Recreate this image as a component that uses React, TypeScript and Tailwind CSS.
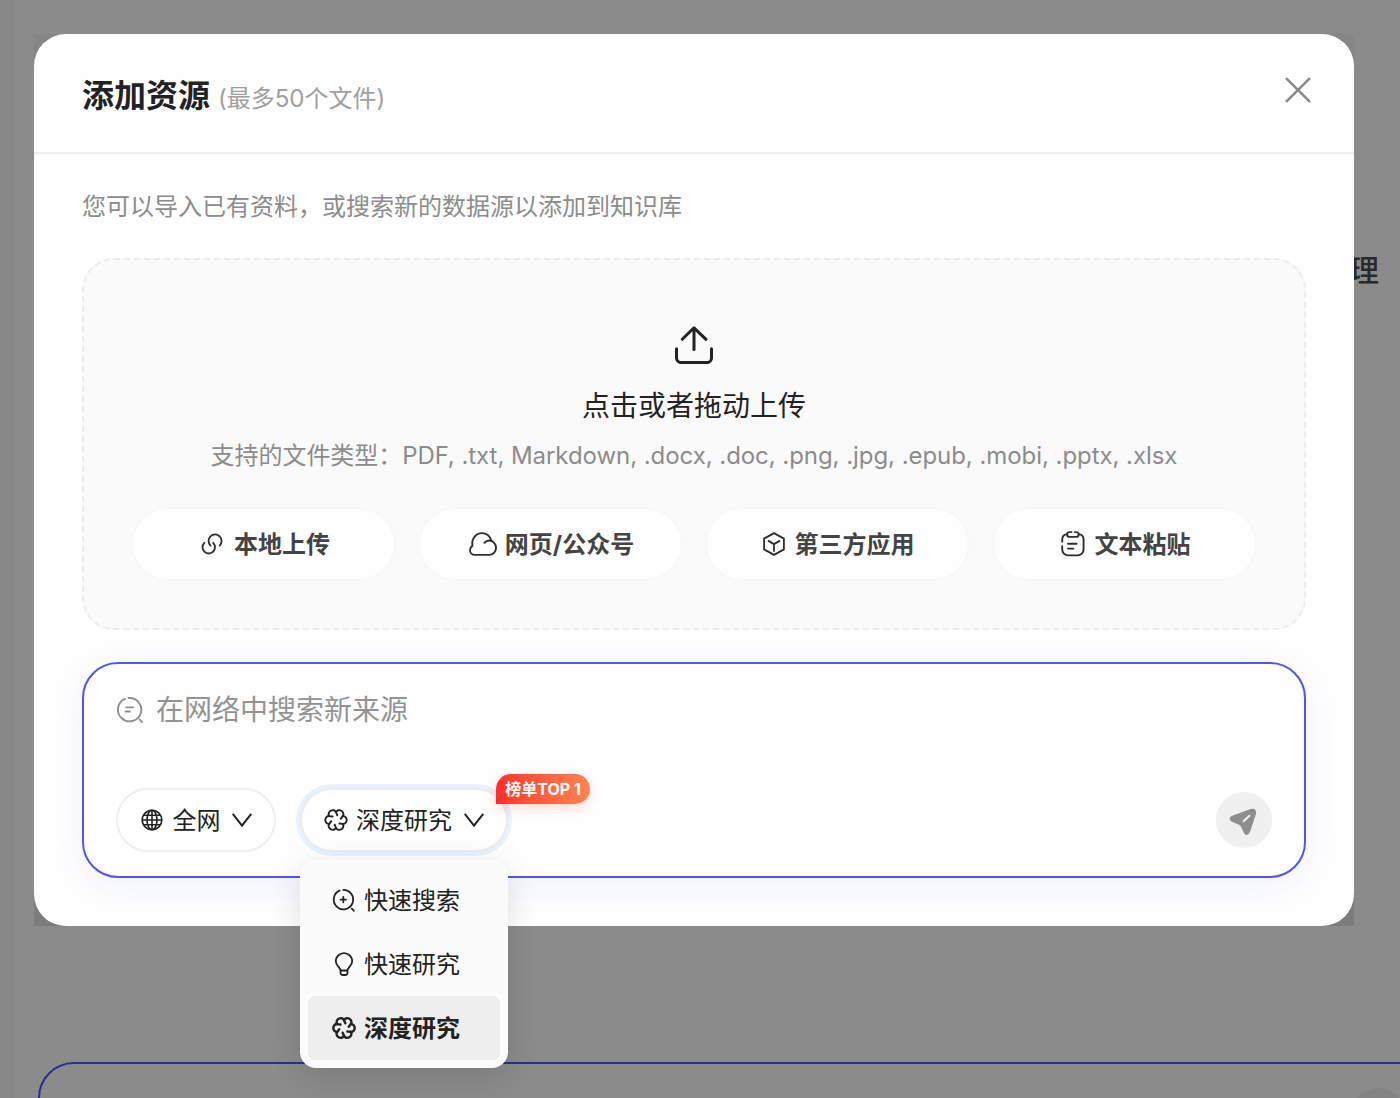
import React, { useState } from 'react';

const LOBES = [0, 60, 120, 180, 240, 300];

function UploadIcon() {
  return (
    <svg width="38" height="38" viewBox="0 0 38 38" fill="none" stroke="#222" strokeWidth="3" strokeLinecap="round" strokeLinejoin="round">
      <path d="M7.3 13.3 19 1.8l12 11.5M19 2v21.5" />
      <path d="M1.5 22.8v9.2a4.6 4.6 0 0 0 4.6 4.6h25.8a4.6 4.6 0 0 0 4.6-4.6v-9.2" />
    </svg>
  );
}

function LinkIcon() {
  return (
    <svg width="26" height="26" viewBox="0 0 24 24" fill="none" stroke="#2e2e2e" strokeWidth="1.7" strokeLinecap="round">
      <path d="M13.06 10.94c2.25 2.25 2.25 5.89 0 8.13s-5.89 2.25-8.13 0-2.25-5.89 0-8.13" />
      <path d="M10.59 13.41c-2.34-2.34-2.34-6.14 0-8.49s6.14-2.34 8.49 0 2.34 6.14 0 8.49" />
    </svg>
  );
}

function CloudIcon() {
  return (
    <svg width="28" height="24" viewBox="0 0 28 24" fill="none" stroke="#2e2e2e" strokeWidth="1.9" strokeLinecap="round" strokeLinejoin="round">
      <path d="M15.4 10.8C16.6 9.3 18.3 8.5 20.1 8.500c3.900 0 6.900 3.200 6.900 7.200s-3 7.200-6.900 7.200H5.800C3.100 22.900 1 20.900 1 18.200c0-2 .9-3.400 2.400-4.300C2.200 7 7 1.100 12.900 1.100c4.400 0 8 2.900 9.400 7.500" />
    </svg>
  );
}

function CubeIcon() {
  return (
    <svg width="22" height="24" viewBox="0 0 22 24" fill="none" stroke="#2e2e2e" strokeWidth="1.8" strokeLinejoin="round">
      <path d="m11 1.1 9.900 5.500v10.800L11 22.900l-9.900-5.500V6.600z" />
      <path d="m5 8.600 6 3.500 6-3.500M11 12.100v7.600" />
    </svg>
  );
}

function ClipboardIcon() {
  return (
    <svg width="24" height="26" viewBox="0 0 24 26" fill="none" stroke="#2e2e2e" strokeWidth="1.9" strokeLinecap="round" strokeLinejoin="round">
      <path d="M1.200 10.800V8.600a5.600 5.600 0 0 1 4.600-5.500M18 3.100a5.600 5.600 0 0 1 4.600 5.500v10a5.800 5.800 0 0 1-5.800 5.800H7a5.800 5.800 0 0 1-5.800-5.800v-3.500" />
      <path d="M10.600 1.100H8.500a2.400 2.400 0 0 0 0 4.800h6.800a2.400 2.400 0 0 0 0-4.800h-1.400" />
      <path d="M7 12.800h8.600M7 17.600h5.400" />
    </svg>
  );
}

function SourceSearchIcon() {
  return (
    <svg width="26" height="26" viewBox="0 0 26 26" fill="none" stroke="#8f8f8f" strokeWidth="1.9" strokeLinecap="round">
      <path d="M11.600 1A11.700 11.700 0 1 1 8 1.900" />
      <path d="M22.600 22.600l2.600 2.600M9.200 10.400h7M8.500 14.500h4.400" />
    </svg>
  );
}

function GlobeIcon() {
  return (
    <svg width="22" height="22" viewBox="0 0 22 22" fill="none" stroke="#222" strokeWidth="1.6">
      <circle cx="11" cy="11" r="9.8" />
      <ellipse cx="11" cy="11" rx="5" ry="9.8" />
      <path d="M11 1.200v19.600M1.200 11h19.600M2.600 6.200h16.800M2.600 15.800h16.800" />
    </svg>
  );
}

function KnotIcon({ strokeWidth }: { strokeWidth: number }) {
  return (
    <svg width="24" height="24" viewBox="-12 -12 24 24" fill="none" stroke="#222" strokeWidth={strokeWidth} strokeLinecap="round" strokeLinejoin="round">
      {LOBES.map((deg) => (
        <path key={deg} transform={`rotate(${deg})`} d="M6.700-3.900C9.100-4.100 10.700-2.200 10.700 0S9 4.300 6.700 3.900L3.400 3.500" />
      ))}
    </svg>
  );
}

function QuickSearchIcon() {
  return (
    <svg width="24" height="24" viewBox="0 0 24 24" fill="none" stroke="#222" strokeWidth="1.8" strokeLinecap="round">
      <path d="M11.300 1.900A9.700 9.700 0 1 1 7.600 2.700" />
      <path d="M19.800 20.700l2.100 2.100M11.300 8.900v5.400M8.600 11.600H14" />
    </svg>
  );
}

function BulbIcon() {
  return (
    <svg width="24" height="24" viewBox="0 0 24 24" fill="none" stroke="#222" strokeWidth="1.8" strokeLinecap="round" strokeLinejoin="round">
      <path d="M8.500 18.500c0-3-4.700-4.700-4.700-9.200a8.200 8.200 0 0 1 16.400 0c0 4.500-4.700 6.200-4.700 9.200zM8.500 18.500v2.300a2.200 2.200 0 0 0 2.200 2.200h2.600a2.200 2.200 0 0 0 2.200-2.200v-2.300" />
    </svg>
  );
}

function ChevronIcon() {
  return (
    <svg width="20" height="14" viewBox="0 0 20 14" fill="none" stroke="#222" strokeWidth="2">
      <path d="M.8.8 10 12.600 19.200.8" />
    </svg>
  );
}

function SendIcon() {
  return (
    <svg width="28" height="28" viewBox="1.2 -2 28 28" fill="none" className="overflow-visible">
      <path d="M3 8.500 22 1.600Q27.400.2 26.600 5.600L20.800 23.200Q18.400 28.600 15.600 24.600L12.800 18.600Q12 16.900 10 16L3.400 13.300Q-.4 11 3 8.500z" fill="#8e8e8e" stroke="#8e8e8e" strokeWidth="1.2" strokeLinejoin="round" />
      <path d="m14.800 13.200 5.800-5.400" stroke="#f0f0f0" strokeWidth="2" strokeLinecap="round" />
    </svg>
  );
}

const sources = [
  { label: '本地上传', icon: <LinkIcon />, gap: 'gap-[9px]' },
  { label: '网页/公众号', icon: <CloudIcon />, gap: 'gap-2' },
  { label: '第三方应用', icon: <CubeIcon />, gap: 'gap-2.5' },
  { label: '文本粘贴', icon: <ClipboardIcon />, gap: 'gap-2.5' },
];

const modes = [
  { label: '快速搜索', icon: <QuickSearchIcon /> },
  { label: '快速研究', icon: <BulbIcon /> },
  { label: '深度研究', icon: <KnotIcon strokeWidth={2.4} /> },
];

export default function App() {
  const [mode, setMode] = useState('深度研究');

  return (
    <div className="relative h-[1098px] w-[1400px] overflow-hidden bg-[#8b8b8b] font-['Inter','Noto_Sans_CJK_SC',sans-serif] text-[#222]">

      {/* Page under the mask */}
      <div className="flex h-full">
        <div className="w-3.5 shrink-0 bg-[#888]"></div>
        <div className="flex flex-1 flex-col pl-6">
          <div className="flex h-[1062px] shrink-0 justify-end pt-[250px] pr-[21px] text-[30px] leading-10 font-medium text-[#292929]">管理</div>
          <div className="-mr-10 flex h-40 shrink-0 justify-end rounded-[36px] border-2 border-[#2c2e8b] pt-6 pr-8">
            <div className="h-14 w-14 rounded-full bg-[#848484]"></div>
          </div>
        </div>
      </div>

      {/* Dialog */}
      <div className="absolute top-[34px] left-[34px] h-[892px] w-[1320px] bg-linear-to-b from-[#868686] to-[#7c7c7c]">
        <div className="h-full rounded-[32px] bg-[#fefefe]">
          <header className="flex h-[120px] items-center justify-between border-b-2 border-[#eee] pr-11 pl-12">
            <h1 className="flex items-baseline gap-2 pt-[5px]">
              <span className="text-[32px] leading-10 font-bold">添加资源</span>
              <span className="text-2xl text-[#a0a0a0]">(最多50个文件)</span>
            </h1>
            <button aria-label="关闭" className="-mt-1.5">
              <svg width="24" height="24" viewBox="0 0 24 24" fill="none" stroke="#8a8a8a" strokeWidth="2.6" strokeLinecap="round" className="overflow-visible">
                <path d="m.8.8 22.400 22.400M23.200.8.8 23.200" />
              </svg>
            </button>
          </header>

          <div className="px-12 pt-[37px]">
            <p className="text-2xl leading-8 text-[#8c8c8c]">您可以导入已有资料，或搜索新的数据源以添加到知识库</p>

            {/* Drop zone */}
            <div className="mt-[35px] flex h-[372px] flex-col items-center rounded-[32px] border-2 border-dashed border-[#ececec] bg-[#fafafa] px-[49px] pt-[66px]">
              <UploadIcon />
              <p className="mt-[22px] text-[28px] leading-10">点击或者拖动上传</p>
              <p className="mt-3.5 text-2xl leading-8 tracking-[-0.055px] whitespace-nowrap text-[#8c8c8c]">
                支持的文件类型：PDF, .txt, Markdown, .docx, .doc, .png, .jpg, .epub, .mobi, .pptx, .xlsx
              </p>
              <div className="mt-[37px] grid w-full grid-cols-4 gap-[26px]">
                {sources.map((s) => (
                  <button key={s.label} className={`flex h-[70px] items-center justify-center rounded-[34px] bg-[#fefefe] pl-0.5 text-2xl font-bold whitespace-nowrap text-[#444] shadow-[0_0_2px_rgba(0,0,0,0.06)] ${s.gap}`}>
                    {s.icon}
                    <span className="pt-0.5">{s.label}</span>
                  </button>
                ))}
              </div>
            </div>

            {/* Web search */}
            <div className="mt-8 flex h-[216px] flex-col justify-between rounded-[36px] border-2 border-[#4f55f5] bg-[#fefefe] px-8 pt-6 pb-6 shadow-[0_8px_32px_rgba(79,85,245,0.08)]">
              <div className="flex h-[42px] items-center gap-[13px] pt-0.5 pl-px text-[28px] text-[#939393]">
                <SourceSearchIcon />
                <span>在网络中搜索新来源</span>
              </div>
              <div className="flex items-center">
                <button className="flex h-16 w-40 items-center justify-center rounded-full border-2 border-[#eee] text-2xl">
                  <GlobeIcon />
                  <span className="mr-[11px] ml-2.5 pt-0.5">全网</span>
                  <ChevronIcon />
                </button>

                <div className="relative ml-6">
                  <button className="flex h-16 w-52 items-center justify-center rounded-full border-2 border-[#ebebeb] bg-[#fefefe] text-2xl ring-4 ring-[#e6f2fe]">
                    <KnotIcon strokeWidth={1.9} />
                    <span className="mr-3 ml-2 pt-0.5">{mode}</span>
                    <ChevronIcon />
                  </button>
                  <span className="absolute -top-3.5 left-[196px] flex h-[30px] w-[94px] items-center justify-center rounded-[15px] rounded-bl-none bg-linear-to-r from-[#ff2a2d] to-[#ff8450] text-base font-bold whitespace-nowrap text-white shadow-[0_4px_12px_rgba(255,70,50,0.2)]">榜单TOP 1</span>

                  {/* Mode menu */}
                  <ul className="absolute top-[72px] left-0 w-52 rounded-2xl bg-[#fbfbfb] p-2 shadow-[0_8px_32px_rgba(0,0,0,0.12)]">
                    {modes.map((m) => (
                      <li
                        key={m.label}
                        onClick={() => setMode(m.label)}
                        className={`flex h-16 cursor-pointer items-center gap-2 rounded-lg pl-6 text-2xl ${m.label === mode ? 'bg-[#eee] font-bold' : ''}`}
                      >
                        {m.icon}
                        <span className="pt-0.5">{m.label}</span>
                      </li>
                    ))}
                  </ul>
                </div>

                <button aria-label="发送" className="ml-auto flex h-14 w-14 items-center justify-center rounded-full bg-[#f0f0f0]">
                  <SendIcon />
                </button>
              </div>
            </div>
          </div>
        </div>
      </div>
    </div>
  );
}
